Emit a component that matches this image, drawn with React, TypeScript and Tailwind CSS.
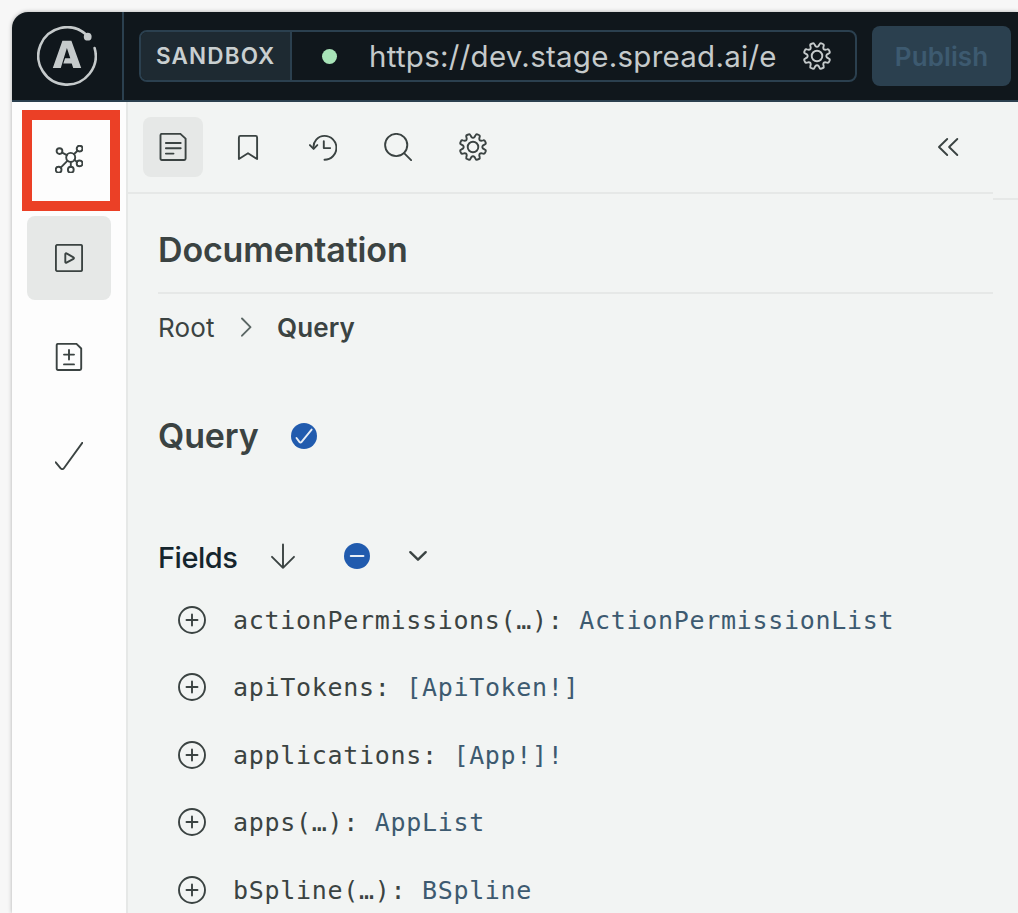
import type { ReactNode } from "react";

type IconProps = { size?: number; className?: string; strokeWidth?: number; children: ReactNode };

function Icon({ size = 28, className = "", strokeWidth = 1.9, children }: IconProps) {
  return (
    <svg
      width={size}
      height={size}
      viewBox={`0 0 ${size} ${size}`}
      fill="none"
      stroke="currentColor"
      strokeWidth={strokeWidth}
      strokeLinecap="round"
      strokeLinejoin="round"
      className={`block shrink-0 ${className}`}
    >
      {children}
    </svg>
  );
}

function ApolloMark() {
  return (
    <svg width="60" height="60" viewBox="0 0 60 60" className="block text-[#c5cacb]" fill="none">
      <path
        d="M49 8.400 A28.700 28.700 0 1 0 57.600 22"
        stroke="currentColor"
        strokeWidth="2.6"
        strokeLinecap="round"
      />
      <circle cx="50.700" cy="10.700" r="3.900" fill="currentColor" />
      <path
        d="M25.400 14.700h9L44.200 42h-8L34.700 37.500h-8.400l1.800-5.300h5.200L29.900 21.900 23.800 42h-8z"
        fill="currentColor"
      />
    </svg>
  );
}

function GearIcon({ className = "" }: { className?: string }) {
  return (
    <Icon className={className}>
      <circle cx="14" cy="14" r="5.3" />
      <path d="M11.4 2.1 L12.3 3.8 Q14 5.6 15.7 3.8 L16.6 2.1 Q17.1 .9 18.3 1.3 L19.9 2 Q21.1 2.5 20.7 3.8 L20.3 5.4 Q20.1 7.9 22.6 7.7 L24.2 7.3 Q25.5 6.9 26 8.1 L26.7 9.7 Q27.1 10.9 25.9 11.4 L24.2 12.3 Q22.4 14 24.2 15.7 L25.9 16.6 Q27.1 17.1 26.7 18.3 L26 19.9 Q25.5 21.1 24.2 20.7 L22.6 20.3 Q20.1 20.1 20.3 22.6 L20.7 24.2 Q21.1 25.5 19.9 26 L18.3 26.7 Q17.1 27.1 16.6 25.9 L15.7 24.2 Q14 22.4 12.3 24.2 L11.4 25.9 Q10.9 27.1 9.7 26.7 L8.1 26 Q6.9 25.5 7.3 24.2 L7.7 22.6 Q7.9 20.1 5.4 20.3 L3.8 20.7 Q2.5 21.1 2 19.9 L1.3 18.3 Q.9 17.1 2.1 16.6 L3.8 15.7 Q5.6 14 3.8 12.3 L2.1 11.4 Q.9 10.9 1.3 9.7 L2 8.1 Q2.5 6.9 3.8 7.3 L5.4 7.7 Q7.9 7.9 7.7 5.4 L7.3 3.8 Q6.9 2.5 8.1 2 L9.7 1.3 Q10.9 .9 11.4 2.1 Z" />
    </Icon>
  );
}

function GraphIcon() {
  return (
    <Icon strokeWidth={1.9}>
      <circle cx="15.7" cy="12.4" r="4.5" />
      <circle cx="4.5" cy="6.1" r="2.9" />
      <circle cx="24.6" cy="3.6" r="2.9" />
      <circle cx="24.6" cy="18.4" r="2.9" />
      <circle cx="15.8" cy="24.7" r="2.9" />
      <circle cx="3.6" cy="24.7" r="2.9" />
      <path d="M7.1 7.6l4.8 2.6M22.5 5.7l-3.6 3.5M22 17l-2.6-2.2M15.8 21.7v-4.8M5.7 22.6l6.9-6.9" />
    </Icon>
  );
}

function PlayIcon() {
  return (
    <Icon>
      <rect x=".9" y=".9" width="26.2" height="26.2" rx="1.5" />
      <path d="M10.3 10.1v7.8c0 .7.7 1 1.2.7l7-3.8c.6-.3.6-1.2 0-1.5l-7-3.9c-.5-.3-1.2 0-1.2.7z" />
    </Icon>
  );
}

function DiffIcon() {
  return (
    <Icon>
      <path d="M3 .9h18.5l4.7 4.6v20.1c0 .9-.5 1.4-1.4 1.4H3c-.8 0-1.3-.5-1.3-1.4V2.3C1.7 1.4 2.2.9 3 .9z" />
      <path d="M14 7v9.6M9 11.6h10M9 21.4h10" />
    </Icon>
  );
}

function CheckIcon() {
  return (
    <Icon>
      <path d="M.7 20.3l5 6.1c.9 1 2.4 1 3.2-.1L27.3.8" />
    </Icon>
  );
}

function DocIcon() {
  return (
    <Icon>
      <path d="M2.8.9h18.6l5.200 4.700v20c0 .9-.5 1.400-1.300 1.400H2.800c-.8 0-1.300-.5-1.300-1.400V2.300c0-.9.500-1.400 1.300-1.400z" />
      <path d="M6.900 10h14.800M6.900 15.200h14.800M6.900 20.600h7.600" />
    </Icon>
  );
}

function BookmarkIcon() {
  return (
    <Icon>
      <path d="M4.9 26V4.4c0-.9.6-1.5 1.5-1.5h15.2c.9 0 1.5.6 1.5 1.5V26L14 20.2z" />
    </Icon>
  );
}

function HistoryIcon() {
  return (
    <Icon>
      <path d="M4.6 15.5C3.7 8.5 9 2.9 15.5 2.9a11.9 11.9 0 0 1 0 23.8" />
      <path d="M.9 12.100l3.700 3.700 3.700-3.700M14.800 8.200v6.900h6.400" />
    </Icon>
  );
}

function SearchIcon() {
  return (
    <Icon>
      <circle cx="12.2" cy="12" r="11.1" />
      <path d="M20.1 20.2l7 7" />
    </Icon>
  );
}

function PlusCircleIcon() {
  return (
    <Icon>
      <circle cx="14" cy="14" r="13" />
      <path d="M14 8.5v11M8.5 14h11" />
    </Icon>
  );
}

function SelectedDot({ kind }: { kind: "check" | "minus" }) {
  return (
    <span className="flex size-[26.5px] shrink-0 items-center justify-center rounded-full bg-[#215bae] text-[#e8eef6]">
      <Icon size={18} strokeWidth={1.9}>
        {kind === "check" ? (
          <path d="M1.5 11l3.1 4.1c.5.6 1.3.6 1.8 0L16.6 2.6" />
        ) : (
          <path d="M2.7 9h12.8" />
        )}
      </Icon>
    </span>
  );
}

const fields = [
  { name: "actionPermissions(…):", type: "ActionPermissionList" },
  { name: "apiTokens:", type: "[ApiToken!]" },
  { name: "applications:", type: "[App!]!" },
  { name: "apps(…):", type: "AppList" },
  { name: "bSpline(…):", type: "BSpline" },
];

function Header() {
  return (
    <header className="flex h-[90px] shrink-0 items-center border-b-2 border-[#2b404f] bg-[#10171c]">
      <div className="flex h-full w-28 shrink-0 items-center justify-center border-r-2 border-[#2b404f]">
        <ApolloMark />
      </div>
      <div className="ml-[15px] flex h-[52px] w-[718px] shrink-0 items-center overflow-hidden rounded-lg border-2 border-[#2b404f]">
        <div className="flex h-full w-[151px] shrink-0 items-center border-r-2 border-[#2b404f] bg-[#1e2a32] pl-[15px]">
          <span className="text-[22.5px] font-semibold tracking-[1.15px] text-[#c9cfd0]">SANDBOX</span>
        </div>
        <span className="ml-[30px] size-[15px] shrink-0 rounded-full bg-[#a8e4b8]" />
        <span className="ml-8 w-[434px] shrink-0 text-[29.5px] tracking-[0.27px] whitespace-nowrap text-[#c5cacb]">
          https://dev.stage.spread.ai/e
        </span>
        <GearIcon className="text-[#c5cacb]" />
      </div>
      <button className="ml-[15px] h-[60px] w-[139px] shrink-0 rounded-lg bg-[#2b404f] text-[26px] font-semibold tracking-[0.1px] text-[#3d5a70]">
        Publish
      </button>
    </header>
  );
}

function Sidebar() {
  return (
    <nav className="flex w-[116px] shrink-0 flex-col border-r-2 border-[#e6e8e7] bg-[#fdfdfd] pt-2">
      <button className="ml-2.5 flex h-[101px] w-[98px] items-center justify-center border-10 border-[#eb4026] pr-1 pb-1">
        <GraphIcon />
      </button>
      <button className="mt-[5px] ml-[15px] flex size-[84px] items-center justify-center rounded-lg bg-[#e6e8e7]">
        <PlayIcon />
      </button>
      <button className="mt-[15px] ml-[15px] flex size-[84px] items-center justify-center">
        <DiffIcon />
      </button>
      <button className="mt-[15px] ml-[15px] flex size-[84px] items-center justify-center">
        <CheckIcon />
      </button>
    </nav>
  );
}

function Toolbar() {
  return (
    <div className="flex h-[92px] items-center border-b-2 border-[#e6e8e7] pl-[15px]">
      <div className="flex gap-[15px]">
        <button className="flex size-[60px] items-center justify-center rounded-lg bg-[#e6e8e7]">
          <DocIcon />
        </button>
        <button className="flex size-[60px] items-center justify-center"><BookmarkIcon /></button>
        <button className="flex size-[60px] items-center justify-center"><HistoryIcon /></button>
        <button className="flex size-[60px] items-center justify-center"><SearchIcon /></button>
        <button className="flex size-[60px] items-center justify-center"><GearIcon /></button>
      </div>
      <button className="mr-[31px] ml-auto">
        <Icon>
          <path d="M13.2 6L5 14l8.2 8M23.3 6l-8.2 8 8.2 8" />
        </Icon>
      </button>
    </div>
  );
}

function Documentation() {
  return (
    <section className="pl-[30px]">
      <div className="flex h-[100px] items-center border-b-2 border-[#e6e8e7] pt-3.5">
        <h1 className="text-[34px] leading-10 font-semibold tracking-[-0.15px]">Documentation</h1>
      </div>
      <div className="flex h-[66px] items-center text-[26px]">
        <span className="w-[75px] tracking-[0.15px]">Root</span>
        <Icon className="text-[#5b6664]">
          <path d="M9 5.5l8.5 8.6L9 22.700" />
        </Icon>
        <span className="ml-4 font-semibold tracking-[0.1px]">Query</span>
      </div>
      <div className="mt-12 flex h-14 items-center">
        <h2 className="w-[132.5px] pb-0.5 text-[34px] font-semibold tracking-[-0.15px]">Query</h2>
        <SelectedDot kind="check" />
      </div>
      <div className="mt-16 flex h-14 items-center">
        <h3 className="mt-1 w-[111px] text-[29px] font-medium tracking-[-0.5px] text-[#15252d]">Fields</h3>
        <Icon>
          <path d="M14 2.5v23.3M3 14.8l11 11 11-11" />
        </Icon>
        <span className="ml-[46.5px]"><SelectedDot kind="minus" /></span>
        <Icon className="ml-[33.5px]" strokeWidth={2.4}>
          <path d="M6.3 10.2l7.7 7.5 7.700-7.500" />
        </Icon>
      </div>
      <ul className="mt-[2px]">
        {fields.map((field) => (
          <li key={field.name} className="flex h-[67.5px] items-center pl-5">
            <PlusCircleIcon />
            <code className="mt-px ml-[27px] font-['DejaVu_Sans_Mono',monospace] text-[25px] tracking-[0.69px] whitespace-pre">
              {field.name} <span className="text-[#3d5a70]">{field.type}</span>
            </code>
          </li>
        ))}
      </ul>
    </section>
  );
}

export default function App() {
  return (
    <div className="h-[913px] overflow-hidden bg-[#f7f7f7] pt-3 pl-3 font-['Inter',sans-serif] text-[#3b4342]">
      <div className="flex h-full flex-col overflow-hidden rounded-tl-2xl bg-[#f2f4f3] shadow-[0_0_4px_rgba(0,0,0,0.3)]">
        <Header />
        <div className="flex min-h-0 flex-1">
          <Sidebar />
          <main className="w-[865px] shrink-0 overflow-hidden">
            <Toolbar />
            <Documentation />
          </main>
          <aside className="min-w-0 flex-1">
            <div className="h-[98px] border-b-2 border-[#e6e8e7]" />
          </aside>
        </div>
      </div>
    </div>
  );
}
